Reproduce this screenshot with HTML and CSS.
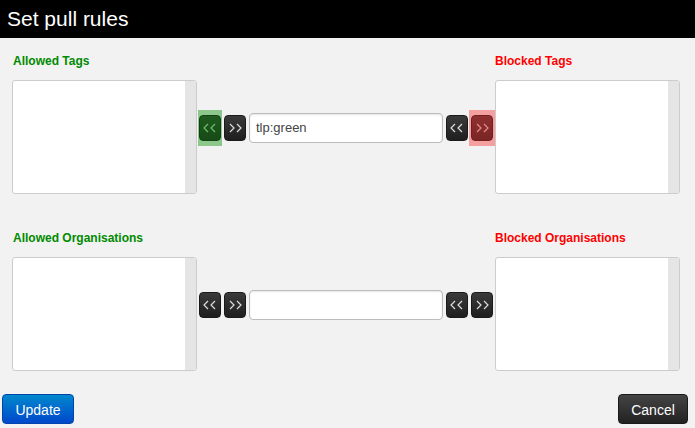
FILE: index.html
```html
<!DOCTYPE html>
<html>
<head>
<meta charset="utf-8">
<link rel="stylesheet" href="styles.css">
</head>
<body>
<div class="dialog">
  <div class="header">Set pull rules</div>
  <div class="content">
    <div class="section first">
      <div class="labels">
        <span class="lbl allowed">Allowed Tags</span>
        <span class="lbl blocked">Blocked Tags</span>
      </div>
      <div class="row">
        <div class="box"><div class="sbar"></div></div>
        <div class="controls">
          <span class="hl hl-green"><span class="btn btn-green"><svg viewBox="0 0 14 10" width="14" height="10"><polyline points="5,1 1,5 5,9"/><polyline points="12,1 8,5 12,9"/></svg></span></span>
          <span class="btn"><svg viewBox="0 0 14 10" width="14" height="10"><polyline points="2,1 6,5 2,9"/><polyline points="9,1 13,5 9,9"/></svg></span>
          <div class="input">tlp:green</div>
          <span class="btn"><svg viewBox="0 0 14 10" width="14" height="10"><polyline points="5,1 1,5 5,9"/><polyline points="12,1 8,5 12,9"/></svg></span>
          <span class="hl hl-red"><span class="btn btn-red"><svg viewBox="0 0 14 10" width="14" height="10"><polyline points="2,1 6,5 2,9"/><polyline points="9,1 13,5 9,9"/></svg></span></span>
        </div>
        <div class="box"><div class="sbar"></div></div>
      </div>
    </div>
    <div class="section second">
      <div class="labels">
        <span class="lbl allowed">Allowed Organisations</span>
        <span class="lbl blocked">Blocked Organisations</span>
      </div>
      <div class="row">
        <div class="box"><div class="sbar"></div></div>
        <div class="controls">
          <span class="btn"><svg viewBox="0 0 14 10" width="14" height="10"><polyline points="5,1 1,5 5,9"/><polyline points="12,1 8,5 12,9"/></svg></span>
          <span class="btn"><svg viewBox="0 0 14 10" width="14" height="10"><polyline points="2,1 6,5 2,9"/><polyline points="9,1 13,5 9,9"/></svg></span>
          <div class="input"></div>
          <span class="btn"><svg viewBox="0 0 14 10" width="14" height="10"><polyline points="5,1 1,5 5,9"/><polyline points="12,1 8,5 12,9"/></svg></span>
          <span class="btn"><svg viewBox="0 0 14 10" width="14" height="10"><polyline points="2,1 6,5 2,9"/><polyline points="9,1 13,5 9,9"/></svg></span>
        </div>
        <div class="box"><div class="sbar"></div></div>
      </div>
    </div>
  </div>
  <div class="footer">
    <span class="fbtn update">Update</span>
    <span class="fbtn cancel">Cancel</span>
  </div>
</div>
</body>
</html>
```

FILE: styles.css
```css
html, body {
  margin: 0;
  padding: 0;
  background: #f2f2f2;
  font-family: "Liberation Sans", Arial, sans-serif;
}
.dialog {
  width: 695px;
  height: 428px;
  display: flex;
  flex-direction: column;
  background: #f2f2f2;
  overflow: hidden;
}
.header {
  height: 38px;
  line-height: 38px;
  background: #000;
  color: #fff;
  font-size: 21px;
  padding-left: 7px;
}
.content {
  padding: 0 15px 0 12px;
}
.section.first {
  padding-top: 16px;
}
.section.second {
  padding-top: 37px;
}
.labels {
  display: flex;
  justify-content: space-between;
  height: 14px;
  line-height: 14px;
  margin-bottom: 12px;
}
.lbl {
  font-size: 12px;
  font-weight: bold;
  width: 185px;
  padding-left: 1px;
  white-space: nowrap;
}
.lbl.allowed { color: #008a00; }
.lbl.blocked { color: #ff0000; }
.row {
  display: flex;
  align-items: flex-start;
}
.box {
  width: 183px;
  height: 112px;
  background: #fff;
  border: 1px solid #cccccc;
  border-radius: 3px;
  display: flex;
  justify-content: flex-end;
  overflow: hidden;
}
.sbar {
  width: 11px;
  height: 100%;
  background: #e5e5e5;
}
.controls {
  width: 298px;
  height: 30px;
  margin-top: 33px;
  display: flex;
  align-items: center;
  gap: 3px;
  padding: 0 2px;
  box-sizing: border-box;
}
.btn {
  width: 22px;
  height: 26px;
  border-radius: 4px;
  background: linear-gradient(#3a3a3a, #1f1f1f);
  border: 1px solid #1a1a1a;
  box-sizing: border-box;
  display: flex;
  align-items: center;
  justify-content: center;
  flex: none;
}
.btn svg {
  fill: none;
  stroke: #dcdcdc;
  stroke-width: 1.2;
}
.hl {
  display: flex;
  flex: none;
  padding: 5px 1px;
  margin: -5px -1px;
}
.hl-green { background: #8cc88c; }
.hl-red { background: #f4a0a0; padding: 5px 2px; margin: -5px -2px; }
.btn-green {
  background: linear-gradient(#1f5a1f, #174a17);
  border-color: #154015;
}
.btn-green svg { stroke: #6bbf6b; }
.btn-red {
  background: linear-gradient(#8f3030, #7a2525);
  border-color: #702020;
}
.btn-red svg { stroke: #e88a8a; }
.input {
  flex: 1;
  height: 30px;
  box-sizing: border-box;
  border: 1px solid #bcbcbc;
  border-radius: 4px;
  background: #fff;
  box-shadow: inset 0 1px 2px rgba(0,0,0,0.1);
  font-size: 13px;
  color: #444;
  line-height: 28px;
  padding-left: 6px;
}
.footer {
  margin-top: auto;
  height: 34px;
  display: flex;
  justify-content: space-between;
  padding: 0 7px 0 2px;
}
.fbtn {
  height: 30px;
  line-height: 30px;
  border-radius: 4px;
  color: #fff;
  font-size: 14px;
  text-align: center;
  box-sizing: border-box;
}
.update {
  width: 72px;
  background: linear-gradient(#0088cc, #0048cc);
  border: 1px solid #0044aa;
}
.cancel {
  width: 70px;
  background: linear-gradient(#444, #222);
  border: 1px solid #1a1a1a;
}
```
